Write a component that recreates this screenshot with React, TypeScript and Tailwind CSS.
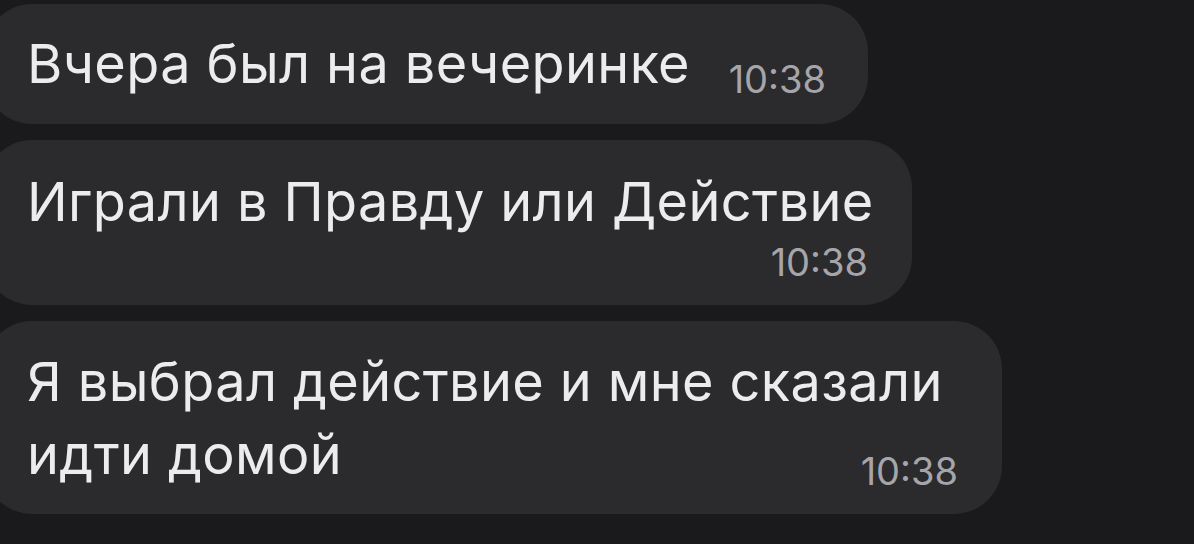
export default function App() {
  return (
    <div
      className="w-[1194px] h-[544px] overflow-hidden bg-[#1a1a1c] text-[#ececee]"
      style={{ fontFamily: 'Inter, "Noto Sans", sans-serif' }}
    >
      <div className="flex flex-col items-start gap-[16px] pt-[4px] -ml-[16px]">
        {/* bubble 1 */}
        <div className="w-[884px] h-[120px] rounded-[48px] bg-[#2b2b2e] pl-[43px] pr-[42px] pt-[23px] flex items-start justify-between">
          <span className="text-[54px] leading-[73px] tracking-[0.4px]">Вчера был на вечеринке</span>
          <span className="text-[38px] leading-[40px] text-[#a6a6aa] mt-[32px]">10:38</span>
        </div>

        {/* bubble 2 */}
        <div className="w-[928px] h-[165px] rounded-[48px] bg-[#2b2b2e] pl-[43px] pr-[44px] pt-[25px] flex flex-col">
          <span className="text-[54px] leading-[73px] tracking-[0.4px] whitespace-nowrap">Играли в Правду или Действие</span>
          <span className="self-end text-[38px] leading-[40px] text-[#a6a6aa] mt-[4px]">10:38</span>
        </div>

        {/* bubble 3 */}
        <div className="w-[1018px] h-[193px] rounded-[48px] bg-[#2b2b2e] pl-[43px] pr-[44px] pt-[24px] flex flex-col">
          <span className="text-[54px] leading-[73px] tracking-[0.4px] whitespace-nowrap">Я выбрал действие и мне сказали</span>
          <div className="flex items-start justify-between">
            <span className="text-[54px] leading-[73px] tracking-[0.4px]">идти домой</span>
            <span className="text-[38px] leading-[40px] text-[#a6a6aa] mt-[33px]">10:38</span>
          </div>
        </div>
      </div>
    </div>
  )
}
